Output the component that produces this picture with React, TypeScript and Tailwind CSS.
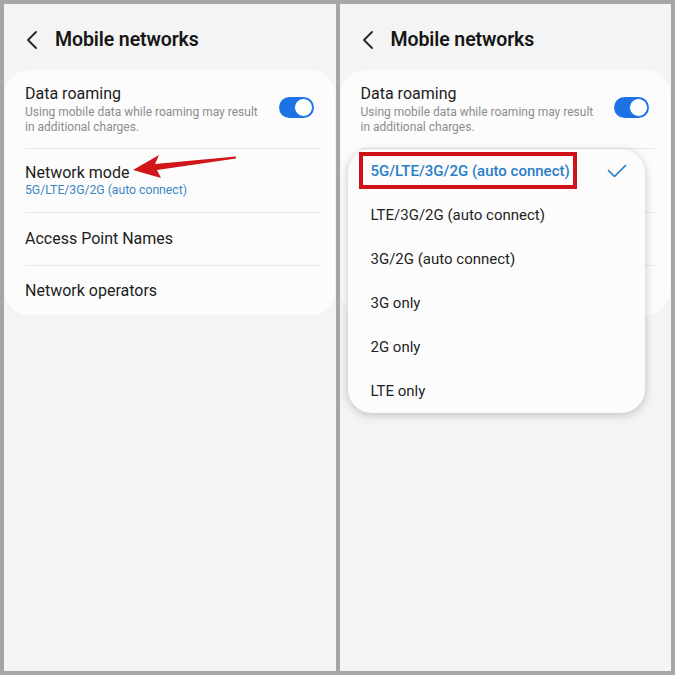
const FONT = { fontFamily: 'Roboto, "Noto Sans", sans-serif' };

const MODES = [
  '5G/LTE/3G/2G (auto connect)',
  'LTE/3G/2G (auto connect)',
  '3G/2G (auto connect)',
  '3G only',
  '2G only',
  'LTE only',
];

function Header() {
  return (
    <div className="flex items-center h-[66px] pt-[6px] pl-[22px]">
      <svg width="12" height="20" viewBox="0 0 12 20" className="mr-[17px]">
        <path d="M10 2 L2 10 L10 18" fill="none" stroke="#222" strokeWidth="1.8" strokeLinecap="round" strokeLinejoin="round" />
      </svg>
      <span className="text-[19.5px] font-semibold text-[#161616] tracking-[-0.1px]">Mobile networks</span>
    </div>
  );
}

function Toggle() {
  return (
    <div className="relative w-[35px] h-[21px] rounded-full bg-[#1b73e6] flex items-center justify-end pr-[1px]">
      <div className="w-[19px] h-[19px] rounded-full bg-white border-[1.5px] border-[#1b73e6]" />
    </div>
  );
}

function Divider() {
  return <div className="h-px bg-[#e8e8e8] mr-[-5px]" />;
}

function SettingsCard() {
  return (
    <div className="mx-[1px] bg-[#fcfcfc] rounded-[24px] px-5">
      <div className="flex items-start pt-[14px] pb-[13px]">
        <div className="flex-1">
          <div className="text-[16px] leading-[20px] text-[#1c1c1c]">Data roaming</div>
          <div className="pt-[1px] text-[12px] leading-[15px] text-[#8d8d8d]">
            Using mobile data while roaming may result
            <br />
            in additional charges.
          </div>
        </div>
        <div className="pt-[13px] pr-px">
          <Toggle />
        </div>
      </div>
      <Divider />
      <div className="pt-[14px] pb-[14px]">
        <div className="text-[16px] leading-[20px] text-[#1c1c1c]">Network mode</div>
        <div className="text-[12.2px] leading-[15px] text-[#3a86c6]">5G/LTE/3G/2G (auto connect)</div>
      </div>
      <Divider />
      <div className="h-[52px] flex items-center text-[16px] text-[#1c1c1c]">Access Point Names</div>
      <Divider />
      <div className="h-[49px] flex items-center text-[16px] text-[#1c1c1c]">Network operators</div>
    </div>
  );
}

function Panel({ children }: { children?: React.ReactNode }) {
  return (
    <div className="relative flex-1 bg-[#f4f4f4]">
      <Header />
      <SettingsCard />
      {children}
    </div>
  );
}

function ModeMenu() {
  return (
    <div className="absolute left-[8px] top-[145px] w-[297px] bg-[#fcfcfc] rounded-[24px] shadow-[0_2px_10px_rgba(0,0,0,0.22)]">
      {MODES.map((mode, i) => (
        <div key={mode} className="h-[44px] flex items-center pl-[23px] pr-[18px]">
          <span
            className={`flex-1 text-[15px] ${
              i === 0 ? 'text-[#2a7ec4] font-medium' : 'text-[#1f1f1f]'
            }`}
          >
            {mode}
          </span>
          {i === 0 && (
            <svg width="20" height="14" viewBox="0 0 20 14">
              <path d="M1.5 6.5 L7.5 12.5 L18.5 1.5" fill="none" stroke="#2a7ec4" strokeWidth="1.7" strokeLinecap="round" strokeLinejoin="round" />
            </svg>
          )}
        </div>
      ))}
      {/* highlight annotation */}
      <div className="absolute left-[11px] top-[3px] w-[218px] h-[37px] border-[4px] border-[#d0121b]" />
    </div>
  );
}

export default function App() {
  return (
    <div className="w-[675px] h-[675px] bg-[#a6a6a6] p-[4px] flex gap-[4px]" style={FONT}>
      <Panel>
        {/* arrow annotation */}
        <svg className="absolute left-0 top-0" width="331" height="320" viewBox="0 0 331 320">
          <polygon
            points="129,166 155,151 151,160 232,152.5 232,154.5 153,166 157,174"
            fill="#d0151b"
          />
        </svg>
      </Panel>
      <Panel>
        <ModeMenu />
      </Panel>
    </div>
  );
}
